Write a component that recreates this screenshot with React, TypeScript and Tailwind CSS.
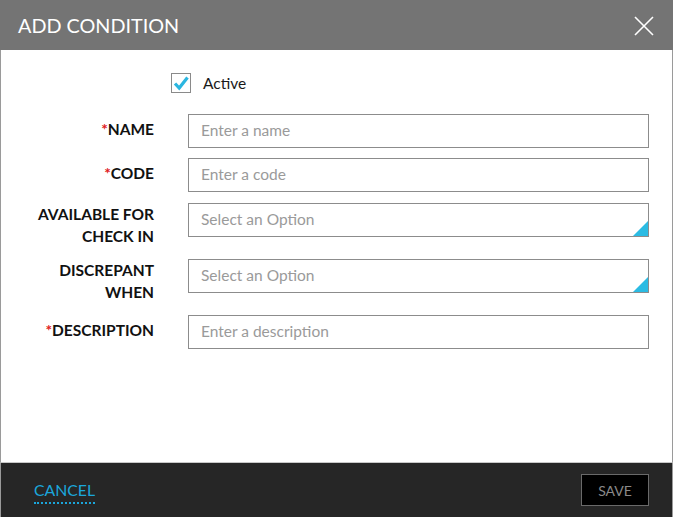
import React from "react";

const font = { fontFamily: "Lato, 'Open Sans', sans-serif" };

function Required() {
  return <span className="text-[#e0201c]">*</span>;
}

function Row({
  label,
  placeholder,
  select,
  twoLine,
  className,
}: {
  label: React.ReactNode;
  placeholder: string;
  select?: boolean;
  twoLine?: boolean;
  className?: string;
}) {
  return (
    <div className={`flex items-start ${className ?? ""}`}>
      <div
        className={`w-[153px] shrink-0 text-right text-[15.5px] font-bold leading-[22px] text-[#111] ${
          twoLine ? "pt-0" : "pt-[4px]"
        }`}
      >
        {label}
      </div>
      <div className="relative ml-[34px] h-[34px] w-[461px] border border-[#8c8c8c] bg-white">
        <div className="flex h-full items-center pl-[12px] text-[15.5px] text-[#9a9a9a]">
          {placeholder}
        </div>
        {select && (
          <svg
            className="absolute bottom-0 right-0"
            width="15"
            height="15"
            viewBox="0 0 15 15"
          >
            <polygon points="15,0 15,15 0,15" fill="#2bbbe3" />
          </svg>
        )}
      </div>
    </div>
  );
}

export default function App() {
  return (
    <div className="flex h-[517px] w-[673px] flex-col bg-white" style={font}>
      <header className="flex h-[50px] shrink-0 items-center justify-between bg-[#747474] pl-[18px] pr-[19px]">
        <h1 className="mt-[1px] text-[19.8px] font-normal text-white">ADD CONDITION</h1>
        <svg width="20" height="20" viewBox="0 0 20 20" className="mt-[1px]">
          <path d="M1 1 L19 19 M19 1 L1 19" stroke="white" strokeWidth="1.6" />
        </svg>
      </header>

      <main className="flex-1 border-x border-[#9a9a9a] pt-[23px]">
        <div className="flex h-[20px] items-center pl-[170px]">
          <div className="flex h-[20px] w-[20px] items-center justify-center border border-[#8a8a8a] bg-white">
            <svg width="16" height="16" viewBox="0 0 16 16">
              <path
                d="M2 8.5 L6.2 13 L14.5 2.5"
                fill="none"
                stroke="#2bb6e0"
                strokeWidth="3.2"
                strokeLinejoin="miter"
              />
            </svg>
          </div>
          <span className="ml-[12px] mt-[2px] text-[15.5px] text-[#1a1a1a]">Active</span>
        </div>

        <div className="mt-[21px] flex flex-col">
          <Row
            label={
              <>
                <Required />
                NAME
              </>
            }
            placeholder="Enter a name"
          />
          <Row
            className="mt-[10px]"
            label={
              <>
                <Required />
                CODE
              </>
            }
            placeholder="Enter a code"
          />
          <Row
            className="mt-[11px]"
            twoLine
            select
            label={
              <>
                AVAILABLE FOR
                <br />
                CHECK IN
              </>
            }
            placeholder="Select an Option"
          />
          <Row
            className="mt-[12px]"
            twoLine
            select
            label={
              <>
                DISCREPANT
                <br />
                WHEN
              </>
            }
            placeholder="Select an Option"
          />
          <Row
            className="mt-[12px]"
            label={
              <>
                <Required />
                DESCRIPTION
              </>
            }
            placeholder="Enter a description"
          />
        </div>
      </main>

      <footer className="flex h-[55px] shrink-0 items-center justify-between border-x border-t border-x-[#9a9a9a] border-t-[#c8c8c8] bg-[#262626] pl-[33px] pr-[23px]">
        <button className="mt-[3px] border-b-2 border-dotted border-[#1ba6db] pb-[2px] text-[15.8px] leading-[20px] text-[#1ba6db]">
          CANCEL
        </button>
        <button className="flex h-[32px] w-[68px] items-center justify-center border border-[#6a6a6a] bg-black text-[14px] text-[#8a8a8a]">
          SAVE
        </button>
      </footer>
    </div>
  );
}
